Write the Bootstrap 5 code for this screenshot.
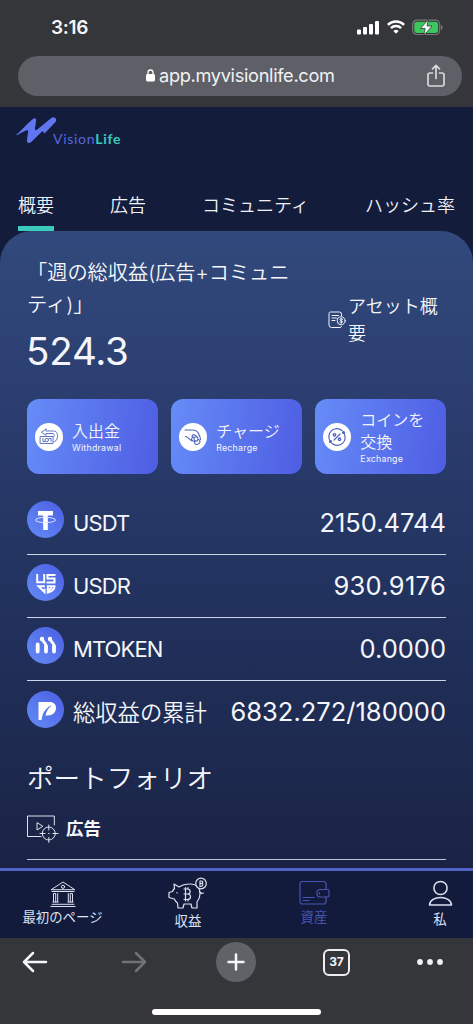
<!DOCTYPE html>
<html lang="ja">
<head>
<meta charset="utf-8">
<meta name="viewport" content="width=device-width, initial-scale=1">
<title>VisionLife</title>
<link href="https://cdn.jsdelivr.net/npm/bootstrap@5.3.0/dist/css/bootstrap.min.css" rel="stylesheet">
<style>
body{font-family:Inter,"Noto Sans CJK JP",sans-serif;height:1024px;overflow:hidden;background:#353639;color:#f4f6fb;font-weight:350}
svg{display:block;flex:none}
.line{fill:none;stroke:currentColor;stroke-linecap:round;stroke-linejoin:round}
.status-bar{height:56px;padding:0 30px 0 51px}
.clock{font-size:19px;font-weight:600;line-height:54px;letter-spacing:-.3px}
.address{height:40px;margin:0 11px 0 18px;border-radius:20px;background:#5f6067;font-size:18.2px;font-weight:400;color:#f1f1f3}
.url-text{letter-spacing:-.32px}
.chrome-top{height:107px}
.site-head{height:124px;background:#141c3c}
.logo-row{height:72px;padding:9px 0 0 15px}
.brand-word{font-family:Lato,sans-serif;font-size:14px;line-height:16px;letter-spacing:.7px;color:#5468d8;margin:15px 0 0 -4px;font-weight:400}
.brand-word b{color:#35cdbd;font-weight:700}
.tabs-row{height:52px;padding:0 18px}
.tab-link{font-size:18px;line-height:27px;padding-top:13px;height:52px;border-bottom:5px solid transparent;color:#eef1f8;white-space:nowrap}
.tab-link.active{border-color:#3bcbbd}
.backing{background:#141c3c}
.panel{height:637px;border-radius:32px 32px 0 0;background:linear-gradient(#31497c,#2c3e70 25%,#22335f 55%,#1a2345);padding:26px 27px 0;overflow:hidden}
.earn-title{font-size:20.2px;line-height:32px;width:270px}
.earn-sum{font-size:38.5px;line-height:60px;font-weight:400;letter-spacing:-.2px;margin-left:-1px}
.asset{width:118px;margin-top:36px;font-size:18px;line-height:27px}
.act{height:75px;border-radius:12px;background:linear-gradient(100deg,#668cf7,#4e5de3);padding-left:8px;gap:9px;flex:1 1 0}
.act-name{font-size:16px;line-height:22px;padding-top:1px;margin-bottom:-1px}
.act-sub{font-size:8.8px;line-height:14px;letter-spacing:.25px;font-weight:400}
.disc{width:28px;height:28px;border-radius:50%;background:#fff;color:#4f66bd}
.coin{width:37px;height:37px;border-radius:50%;background:linear-gradient(225deg,#4b5ce2,#5a7bef 60%,#648af5);color:#fff}
.bal{height:63px;border-bottom:1.5px solid #cdd4e6;padding-bottom:7px}
.bal:last-child{border:0}
.bal-name{font-size:22.3px;line-height:30px;margin:7px 0 0 9px;white-space:nowrap}
.bal-name.latin{font-size:22px;letter-spacing:-.9px;font-weight:400}
.bal-num{font-size:25.5px;line-height:30px;margin-top:6px;font-weight:400;white-space:nowrap}
.portfolio{font-size:26.6px;line-height:38px}
.ad-row{height:50px;border-bottom:1.5px solid #bfc6db}
.ad-name{font-size:17.5px;font-weight:700;line-height:26px;padding-top:1px}
.bottom-nav{height:70px;border-top:3px solid #5062c6;background:#131b3c;font-size:13.4px;line-height:18px;font-weight:400}
.bottom-nav a{color:#dde1ef;text-decoration:none;white-space:nowrap;width:126px;flex:none}
.bottom-nav a:first-child{width:125px}
.bottom-nav a:last-child{width:64px;margin-left:31px}
.bottom-nav a.active{color:#4654b4}
.plus{width:40px;height:40px;border-radius:50%;background:#5f6267;margin-left:2px}
.count{width:27px;height:27px;border:2.4px solid #eee;border-radius:6px;font-size:12px;font-weight:700;line-height:22px}
.home-line{width:169px;height:6px;border-radius:3px;background:#fff}
</style>
</head>
<body>
<header class="chrome-top">
  <div class="status-bar d-flex align-items-center justify-content-between">
    <div class="clock">3:16</div>
    <div class="d-flex align-items-center" style="margin-top:-2px">
      <svg width="22" height="15" viewBox="0 0 22 15" fill="#fff"><rect y="9.5" width="4" height="5" rx="1"/><rect x="6" y="7" width="4" height="7.5" rx="1"/><rect x="12" y="4" width="4" height="10.500" rx="1"/><rect x="18" y="1" width="4" height="13.500" rx="1"/></svg>
      <svg class="ms-2" width="18" height="14" viewBox="0 0 18 14" fill="none" stroke="#fff" stroke-width="2.500"><path d="M.9 4.800a11.500 11.500 0 0 1 16.200 0M3.900 8.200a7.300 7.300 0 0 1 10.200 0"/><path d="M9 13.800l-2.600-2.700a3.700 3.700 0 0 1 5.200 0z" fill="#fff" stroke="none"/></svg>
      <svg style="margin-left:7px" width="31" height="17" viewBox="0 0 31 17"><rect x=".7" y="1.200" width="27" height="14.300" rx="4.300" fill="none" stroke="#757a78" stroke-width="1.200"/><rect x="2.300" y="2.800" width="23.800" height="11.100" rx="2.800" fill="#3bc75d"/><path d="M29 6v5c1.300-.5 1.600-1.500 1.600-2.500S30.300 6.500 29 6z" fill="#757a78"/><path d="M16.300 .6L8.500 9.500h4.700l-1.500 7 8.300-9.500h-5z" fill="#fff" stroke="#353639" stroke-width=".8"/></svg>
    </div>
  </div>
  <div class="address d-flex align-items-center">
    <div class="d-flex align-items-center" style="margin-left:128px">
      <svg width="9" height="13" viewBox="0 0 9 13"><rect y="5" width="9" height="7.500" rx="1.400" fill="#fff"/><path d="M2 6V3.500a2.500 2.500 0 0 1 5 0V6" fill="none" stroke="#fff" stroke-width="1.300"/></svg>
      <span class="url-text ms-1">app.myvisionlife.com</span>
    </div>
    <svg class="line ms-auto" style="margin-right:17px;color:#d7d8dc" width="18" height="24" viewBox="0 0 18 24" stroke-width="1.700"><path d="M5.500 9H2.800A1.800 1.800 0 0 0 1 10.800v9.400A1.800 1.800 0 0 0 2.800 22h12.400a1.800 1.800 0 0 0 1.800-1.800v-9.400A1.800 1.800 0 0 0 15.200 9h-2.700M9 14.500V1.500M5.500 4.800L9 1.300l3.500 3.500"/></svg>
  </div>
</header>

<div class="site-head">
  <div class="logo-row d-flex">
    <svg width="42" height="30" viewBox="0 0 42 30"><path d="M.5 19.500C7 13.500 12 8 17.500 3.200c2.200-1.900 4.300-1 3.600 1.300L20 12.500c-.2 2 .8 2.300 2.300 1L36 2.300c1.500-1.200 3-1.300 4.300-.2 1.400 1.200 1.300 2.800 0 4.100L29.500 17.500l-2-2.500L16.300 26c-2.300 1.800-4.800.8-4.400-1.700l1.200-8.300c.2-2-1.100-2.200-2.700-1.200C7 16.500 4 18.200.5 19.500z" fill="#6076ee"/></svg>
    <div class="brand-word">Vision<b>Life</b></div>
  </div>
  <nav class="tabs-row d-flex justify-content-between">
    <div class="tab-link active">概要</div><div class="tab-link">広告</div><div class="tab-link">コミュニティ</div><div class="tab-link">ハッシュ率</div>
  </nav>
</div>

<main class="backing"><div class="panel">
  <div class="d-flex justify-content-between" style="height:142px">
    <div><div class="earn-title">「週の総収益(広告+コミュニティ)」</div><div class="earn-sum">524.3</div></div>
    <div class="asset d-flex align-items-center align-self-start">
      <svg class="line" width="18" height="18" viewBox="0 0 18 18" stroke-width="1"><path d="M13.500 5V3a2 2 0 0 0-2-2H2.500A1.500 1.500 0 0 0 1 2.500V14a2.500 2.500 0 0 0 2.500 2.500H12a2 2 0 0 0 1.500-1M4 4.500h6.500M4 7h4.500M4 9.500h3"/><circle cx="13.200" cy="9.800" r="4"/><path d="M14.500 8.300c-1-.9-2.700-.6-2.600.4.100 1.200 2.700.8 2.700 2.100 0 1.100-1.900 1.200-2.800.3M13.200 7.300v5"/></svg>
      <div style="margin-left:2px">アセット概要</div>
    </div>
  </div>
  <div class="d-flex" style="gap:13.500px">
    <div class="act d-flex align-items-center">
      <div class="disc d-flex align-items-center justify-content-center"><svg class="line" width="20" height="20" viewBox="0 0 20 20" stroke-width=".9"><path d="M7 2L2.500 5.200 7 8.300V6.500h6c2.500 0 3 1.500 2 3M7 2v2h7.500c4 0 4.500 4 3.500 8.500L15 15M1.500 9.500h12.500v7H1.500zM4 11.500v3h2M10 11.500h2v3"/><circle cx="7.800" cy="13" r="1.700"/></svg></div>
      <div><div class="act-name">入出金</div><div class="act-sub">Withdrawal</div></div>
    </div>
    <div class="act d-flex align-items-center">
      <div class="disc d-flex align-items-center justify-content-center"><svg class="line" width="20" height="20" viewBox="0 0 20 20" stroke-width="1.100"><path d="M2 3h7c3 0 6 1.500 7 4.500.7 1.500 1.500 3 1.500 5M2.500 9.500c2.500 0 4 3.500 7 4.500M14 9.500L10.500 7.500c-2 1-2 3 .5 2.500M9.500 10.500c-1.500 1.500-1.200 3 .5 3.500l2 .5c-1 1.500 0 3 1.500 3s3.500-1.500 3.500-3-1-2-2-2"/><circle cx="13" cy="12" r="2"/></svg></div>
      <div><div class="act-name">チャージ</div><div class="act-sub">Recharge</div></div>
    </div>
    <div class="act d-flex align-items-center">
      <div class="disc d-flex align-items-center justify-content-center"><svg class="line" width="20" height="20" viewBox="0 0 20 20" stroke-width="1.200"><path d="M3.500 14.500A8 8 0 0 1 15 3.500M16.500 5.500A8 8 0 0 1 5 16.500M7 13l6-6"/><circle cx="7.500" cy="7.800" r="1.200" stroke-width="1.400"/><circle cx="12.500" cy="12.200" r="1.200" stroke-width="1.400"/><circle cx="3.500" cy="14.500" r="1" fill="currentColor"/><circle cx="16.500" cy="5.500" r="1" fill="currentColor"/></svg></div>
      <div style="width:66px"><div class="act-name">コインを交換</div><div class="act-sub">Exchange</div></div>
    </div>
  </div>

  <div style="margin-top:18px">
    <div class="bal d-flex align-items-center">
      <div class="coin"><svg width="37" height="37" viewBox="0 0 37 37" fill="#fff"><path d="M11 10h15v4.500h-5.200V29h-4.600V14.500H11z"/><ellipse cx="18.500" cy="19" rx="10" ry="2.600" fill="none" stroke="#dfe6ff"/></svg></div>
      <div class="bal-name latin">USDT</div><div class="bal-num ms-auto">2150.4744</div>
    </div>
    <div class="bal d-flex align-items-center">
      <div class="coin"><svg width="37" height="37" viewBox="0 0 37 37" fill="none" stroke="#fff" stroke-width="2"><path d="M10.200 10v8.300h7V10M28.500 11h-8v3.500h7v4h-8M18 22.200h-6.500l6 6v-3.500M20.800 22.200h6.700c0 3-3.200 5.300-6.700 6.300zM21 26.300l4-2.500"/></svg></div>
      <div class="bal-name latin">USDR</div><div class="bal-num ms-auto" style="letter-spacing:.3px">930.9176</div>
    </div>
    <div class="bal d-flex align-items-center">
      <div class="coin"><svg width="37" height="37" viewBox="0 0 37 37" fill="none" stroke="#fff" stroke-width="3.800" stroke-linecap="round"><path d="M10.700 17.500V24.500M19 19v5.500M27 19v5.500"/><path d="M15 12.500c1 2.500 4 3 4 6.500M23 12.500c1 2.500 4 3 4 6.500" stroke-width="2.800"/><g fill="#fff" stroke="none"><circle cx="15" cy="12" r="2.200"/><circle cx="23" cy="12" r="2.200"/></g></svg></div>
      <div class="bal-name latin">MTOKEN</div><div class="bal-num ms-auto">0.0000</div>
    </div>
    <div class="bal d-flex align-items-center">
      <div class="coin"><svg width="37" height="37" viewBox="0 0 37 37" fill="#fff"><path d="M11.500 11h11c4.200 0 6.500 2.500 6.500 6 0 4.500-3.500 7.500-8 7.500h-2.500c.8-4 2.500-7 6.500-10.500-7 3.500-9.500 8-10.500 15h-3z"/></svg></div>
      <div class="bal-name">総収益の累計</div><div class="bal-num ms-auto">6832.272/180000</div>
    </div>
  </div>

  <div class="portfolio" style="margin-top:15px">ポートフォリオ</div>
  <div class="ad-row d-flex align-items-center" style="margin-top:13px;padding-bottom:13px">
    <svg class="line" width="32" height="30" viewBox="0 0 32 30" stroke-width=".9"><path d="M14 23.500H.5V3h26.800v9M10 10v7l5.500-3.500z"/><circle cx="21.800" cy="20.500" r="6.500"/><path d="M21.800 12v5M21.800 24.500v5M13 20.500h5M26 20.500h5M21.500 20.500h.6"/></svg>
    <span class="ad-name" style="margin-left:7px">広告</span>
  </div>
</div></main>

<nav class="bottom-nav d-flex">
  <a class="d-flex flex-column align-items-center" style="padding-top:9px">
    <svg class="line" width="26" height="28" viewBox="0 0 26 28" stroke-width="1"><path d="M1.500 9.500L13 2l11.500 7.500zM2 11.500h22M3.500 22V13.500h2.200V22M7.700 22V13.500M18.300 22V13.500M20.300 22V13.500h2.200V22M3 22h5M18 22h5M2 24.300h22M1 26.500h24"/><circle cx="13" cy="6.800" r="1.600"/></svg>
    <span>最初のページ</span></a>
  <a class="d-flex flex-column align-items-center" style="padding-top:6px">
    <svg class="line" width="40" height="34" viewBox="0 0 40 34" stroke-width="1.200"><path d="M6 7l5 3c3-2 7-3 11-3 7 0 10 4.500 10 10 0 4-1.500 6-3 8v6h-5l-1-4h-7l-1 4h-5l-.5-5c-1.500-1-2.500-2.500-3.200-4L1 20.500v-5l3.500-1c.5-1.500 1-2 2-3zM31.500 14.500l2 2 2-.5M9 15.500v.5"/><path d="M16 12h3.500c3.500 0 3.500 5 0 5H16M19.500 17c4 0 4 5.500 0 5.500H16M17.500 10.500V24M20 10.500V12M20 22.500V24"/><circle cx="33" cy="6.500" r="5.300" fill="#131b3c"/><path d="M32 4h1.500c1.800 0 1.500 2.500 0 2.500H32M33.500 6.500c2 0 1.500 3-.5 3h-1V4"/></svg>
    <span style="margin-top:1px">収益</span></a>
  <a class="active d-flex flex-column align-items-center" style="padding-top:9px">
    <svg class="line" width="31" height="28" viewBox="0 0 31 28" stroke-width="1.200"><path d="M27 9.500V4a2.500 2.500 0 0 0-2.500-2.500h-21A2.500 2.500 0 0 0 1 4v17.500A2.500 2.500 0 0 0 3.500 24h21a2.500 2.500 0 0 0 2.500-2.500V17M4 17.500h11M4 20.500h6"/><path d="M21 9.500h7.500A1.500 1.500 0 0 1 30 11v4.500a1.500 1.500 0 0 1-1.500 1.500H21a3 3 0 0 1-3-3v-1.500a3 3 0 0 1 3-3zM20.500 12.500v1.500"/></svg>
    <span>資産</span></a>
  <a class="d-flex flex-column align-items-center" style="padding-top:9px">
    <svg class="line" width="25" height="28" viewBox="0 0 25 28" stroke-width="1.500"><circle cx="12.500" cy="8" r="6.600"/><path d="M1.500 25c.5-10 21.500-10 22 0z"/></svg>
    <span style="margin-top:2px">私</span></a>
</nav>

<footer>
  <div class="d-flex align-items-center justify-content-between" style="height:48px;padding:0 30px 0 22px">
    <svg class="line" width="26" height="22" viewBox="0 0 26 22" stroke-width="2.500"><path d="M24 11H2M11 2l-9 9 9 9"/></svg>
    <svg class="line" style="color:#717275;margin-left:6px" width="26" height="22" viewBox="0 0 26 22" stroke-width="2.500"><path d="M2 11h22M15 2l9 9-9 9"/></svg>
    <div class="plus d-flex align-items-center justify-content-center"><svg class="line" width="18" height="18" viewBox="0 0 18 18" stroke-width="2.500"><path d="M9 1.500v15M1.500 9h15"/></svg></div>
    <div class="count text-center">37</div>
    <svg width="26" height="6" viewBox="0 0 26 6" fill="#f1f1f1"><circle cx="3" cy="3" r="2.900"/><circle cx="13" cy="3" r="2.900"/><circle cx="23" cy="3" r="2.900"/></svg>
  </div>
  <div class="home-line mx-auto" style="margin-top:23px"></div>
</footer>
</body>
</html>
